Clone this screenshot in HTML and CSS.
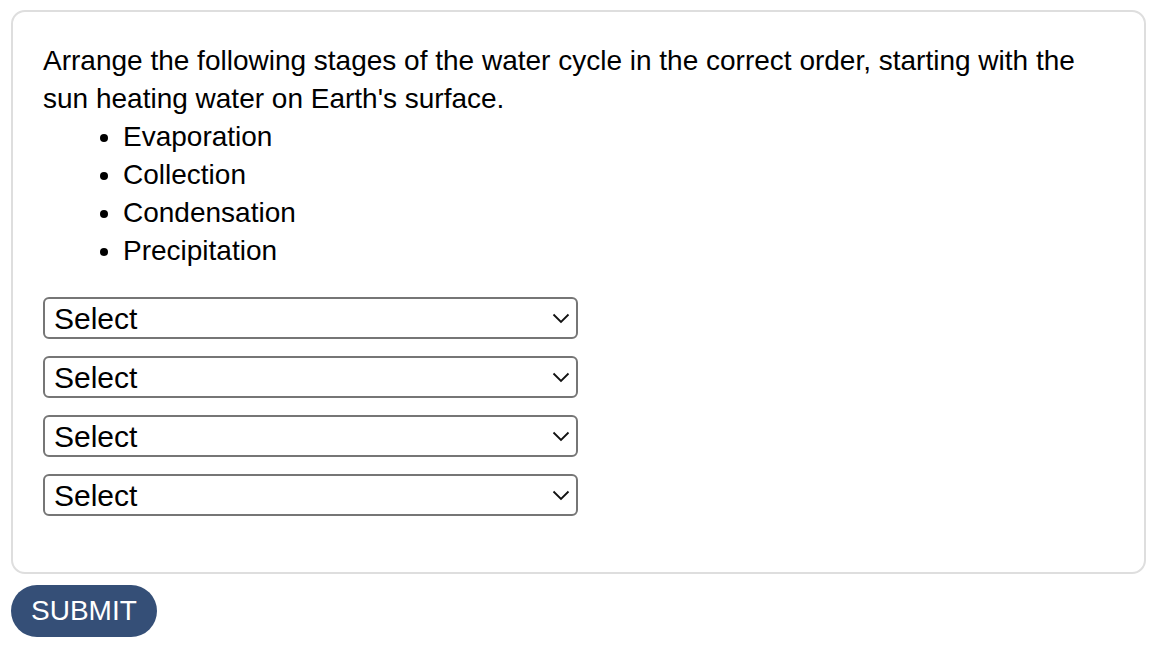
FILE: index.html
```html
<!DOCTYPE html>
<html lang="en">

<head>
    <meta charset="UTF-8">
    <meta name="viewport" content="width=device-width, initial-scale=1.0">
    <title>Water cycle</title>
    <link rel="stylesheet" href="styles.css">
</head>

<body>
    <div class="page">
        <div class="card">
            <p class="question">Arrange the following stages of the water cycle in the correct order, starting with the sun heating water on Earth's surface.</p>
            <ul class="stages">
                <li>Evaporation</li>
                <li>Collection</li>
                <li>Condensation</li>
                <li>Precipitation</li>
            </ul>
            <div class="answers">
                <div class="pick">
                    <select>
                        <option>Select</option>
                        <option>Evaporation</option>
                        <option>Collection</option>
                        <option>Condensation</option>
                        <option>Precipitation</option>
                    </select>
                    <svg class="chev" width="18" height="11" viewBox="0 0 18 11"><path d="M1.5 1.5 L9 9 L16.5 1.5" fill="none" stroke="#111" stroke-width="1.8"/></svg>
                </div>
                <div class="pick">
                    <select>
                        <option>Select</option>
                        <option>Evaporation</option>
                        <option>Collection</option>
                        <option>Condensation</option>
                        <option>Precipitation</option>
                    </select>
                    <svg class="chev" width="18" height="11" viewBox="0 0 18 11"><path d="M1.5 1.5 L9 9 L16.5 1.5" fill="none" stroke="#111" stroke-width="1.8"/></svg>
                </div>
                <div class="pick">
                    <select>
                        <option>Select</option>
                        <option>Evaporation</option>
                        <option>Collection</option>
                        <option>Condensation</option>
                        <option>Precipitation</option>
                    </select>
                    <svg class="chev" width="18" height="11" viewBox="0 0 18 11"><path d="M1.5 1.5 L9 9 L16.5 1.5" fill="none" stroke="#111" stroke-width="1.8"/></svg>
                </div>
                <div class="pick">
                    <select>
                        <option>Select</option>
                        <option>Evaporation</option>
                        <option>Collection</option>
                        <option>Condensation</option>
                        <option>Precipitation</option>
                    </select>
                    <svg class="chev" width="18" height="11" viewBox="0 0 18 11"><path d="M1.5 1.5 L9 9 L16.5 1.5" fill="none" stroke="#111" stroke-width="1.8"/></svg>
                </div>
            </div>
        </div>
        <button class="submit" type="button">SUBMIT</button>
    </div>
</body>

</html>
```

FILE: styles.css
```css
body {
    margin: 0;
    font-family: "Liberation Sans", Arial, sans-serif;
    color: #000;
    background: #fff;
}

.page {
    padding: 10px 14px 0 11px;
}

.card {
    border: 2px solid #dedede;
    border-radius: 14px;
    padding: 30px 30px 56px;
}

.question {
    margin: 0;
    font-size: 28px;
    line-height: 38px;
}

.stages {
    margin: 0;
    padding-left: 80px;
    font-size: 28px;
    line-height: 38px;
}

.answers {
    margin-top: 27px;
    display: flex;
    flex-direction: column;
    gap: 17px;
}

.pick {
    position: relative;
    width: 535px;
}

.pick select {
    -webkit-appearance: none;
    appearance: none;
    display: block;
    width: 100%;
    height: 42px;
    margin: 0;
    padding: 0 40px 0 9px;
    border: 2px solid #767676;
    border-radius: 6px;
    background: #fff;
    font-family: "Liberation Sans", Arial, sans-serif;
    font-size: 30px;
    color: #000;
}

.chev {
    position: absolute;
    right: 8px;
    top: 16px;
    pointer-events: none;
}

.submit {
    margin-top: 11px;
    height: 52px;
    padding: 0 20px;
    border: none;
    border-radius: 26px;
    background: #354f77;
    color: #fff;
    font-family: "Liberation Sans", Arial, sans-serif;
    font-size: 28px;
}
```
